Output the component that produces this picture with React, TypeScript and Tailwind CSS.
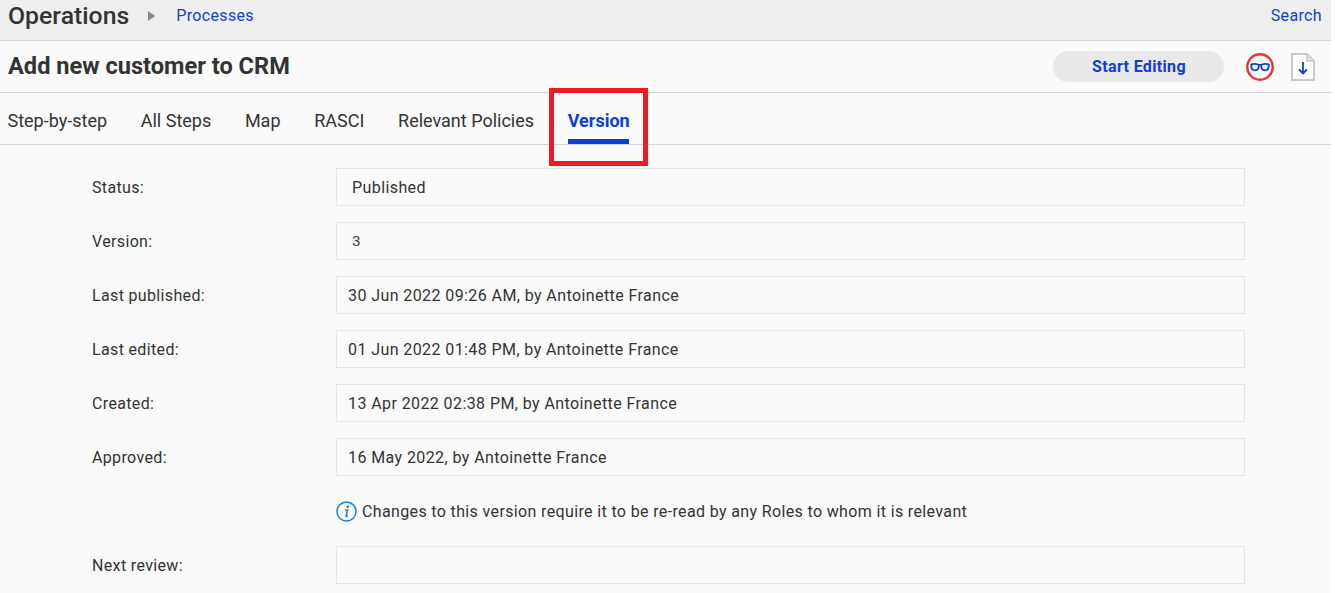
const tabs = ['Step-by-step', 'All Steps', 'Map', 'RASCI', 'Relevant Policies'];

const rows = [
  { label: 'Last published:', value: '30 Jun 2022 09:26 AM, by Antoinette France' },
  { label: 'Last edited:', value: '01 Jun 2022 01:48 PM, by Antoinette France' },
  { label: 'Created:', value: '13 Apr 2022 02:38 PM, by Antoinette France' },
  { label: 'Approved:', value: '16 May 2022, by Antoinette France' },
];

function Row({ label, value, pad = 'pl-[11px] text-[16px] tracking-[0.41px] pt-[1px]' }: { label: string; value?: string; pad?: string }) {
  return (
    <div className="flex items-center h-[38px] mb-4">
      <div className="w-[244px] pl-[92px] shrink-0 box-content text-[16px] tracking-[0.35px] pt-[1px]">{label}</div>
      <div className={`w-[909px] h-[38px] border border-[#e6e6e6] flex items-center ${pad}`}>{value}</div>
    </div>
  );
}

function GlassesIcon() {
  return (
    <svg width="28" height="28" viewBox="0 0 28 28" fill="none">
      <circle cx="14" cy="14" r="12.700" stroke="#f0302c" strokeWidth="2.400" />
      <path d="M4.500 11.500c2.500-.8 5.500-.8 7.500 0 1.300.5 2.700.5 4 0 2-.8 5-.8 7.500 0" stroke="#0c3fd6" strokeWidth="1.800" />
      <path d="M5.300 11.500v1.500c0 2.900 1.300 4.300 3.700 4.300s3.800-1.500 3.800-4.800v-1M15.200 11.500v1c0 3.300 1.400 4.800 3.800 4.800s3.700-1.400 3.700-4.300v-1.500" stroke="#0c3fd6" strokeWidth="1.800" />
    </svg>
  );
}

function FileDownIcon() {
  return (
    <svg width="24" height="28" viewBox="0 0 24 28" fill="none">
      <path d="M1 1h15l7 7v19H1z" fill="#fff" stroke="#c9c9c9" strokeWidth="2" />
      <path d="M16 1v7h7" fill="#e2e2e2" stroke="#c9c9c9" strokeWidth="1.500" />
      <path d="M12 9v11M8 16.500l4 4 4-4" stroke="#0c3fd6" strokeWidth="1.800" />
    </svg>
  );
}

function InfoIcon() {
  return (
    <svg width="21" height="21" viewBox="0 0 21 21" fill="none">
      <circle cx="10.500" cy="10.500" r="9.500" stroke="#1683d8" strokeWidth="1.500" />
      <circle cx="11.800" cy="5.800" r="1.300" fill="#1683d8" />
      <path d="M9 9h2.600l-1.600 6c-.1.600.6.600 1.800-.3" stroke="#1683d8" strokeWidth="1.500" />
    </svg>
  );
}

export default function App() {
  return (
    <div className="min-h-[593px] bg-white font-['Roboto',sans-serif] overflow-hidden">
      <div className="w-[1331px] min-h-[593px] bg-[#fafafa] text-[#333]">
        <div className="h-[41px] bg-[#efefef] border-b border-[#d4d4d4] flex items-center pl-2 pr-[9px]">
          <span className="text-[24.800px] font-medium -mt-[8px] leading-[32px] text-[#333]">Operations</span>
          <span className="ml-[19px] -mt-[9px] w-0 h-0 border-y-[5px] border-y-transparent border-l-[7px] border-l-[#8a8a8a]" />
          <a className="ml-[21px] -mt-[8px] text-[16px] tracking-[0.35px] text-[#0c3fd6]">Processes</a>
          <a className="ml-auto -mt-[8px] text-[16px] tracking-[0.35px] text-[#0c3fd6]">Search</a>
        </div>
        <div className="h-[52px] border-b border-[#d4d4d4] flex items-center pl-2 pr-4">
          <h1 className="text-[23.600px] font-bold text-[#333] leading-[32px] -mt-[1px]">Add new customer to CRM</h1>
          <button className="ml-auto w-[171px] h-[31px] pl-px rounded-full bg-[#e9e9e9] text-[16px] tracking-[0.35px] font-bold text-[#0c3fd6]">
            Start Editing
          </button>
          <span className="ml-[22px] flex"><GlassesIcon /></span>
          <span className="ml-[17px] flex"><FileDownIcon /></span>
        </div>
        <div className="h-[52px] border-b border-[#d4d4d4] flex pl-[7.500px] text-[18px] relative">
          {tabs.map((t) => (
            <span key={t} className="mr-[33.700px] flex items-center h-[51px] pt-[5px] -mt-px">{t}</span>
          ))}
          <span className="relative h-[51px] flex items-center pt-[5px] font-bold text-[#0c3fd6] -mt-px">
            Version
            <span className="absolute left-0 right-px -bottom-px h-[5px] bg-[#0c3fd6]" />
            <span className="absolute -left-[19px] -right-[18px] -top-[4px] h-[78px] border-[5px] border-[#ed1c24]" />
          </span>
        </div>
        <div className="pt-[23px]">
          <Row label="Status:" value="Published" pad="pl-[15px] text-[16px] tracking-[0.41px] pt-[1px]" />
          <Row label="Version:" value="3" pad="pl-[15px] font-['Liberation_Sans',sans-serif] text-[15px] text-[#444]" />
          {rows.map((r) => (
            <Row key={r.label} label={r.label} value={r.value} />
          ))}
          <div className="flex items-center h-[38px] mb-4 pl-[336px] text-[16px] tracking-[0.36px]">
            <InfoIcon />
            <span className="ml-[5px] pt-[1px]">Changes to this version require it to be re-read by any Roles to whom it is relevant</span>
          </div>
          <Row label="Next review:" />
        </div>
      </div>
    </div>
  );
}
